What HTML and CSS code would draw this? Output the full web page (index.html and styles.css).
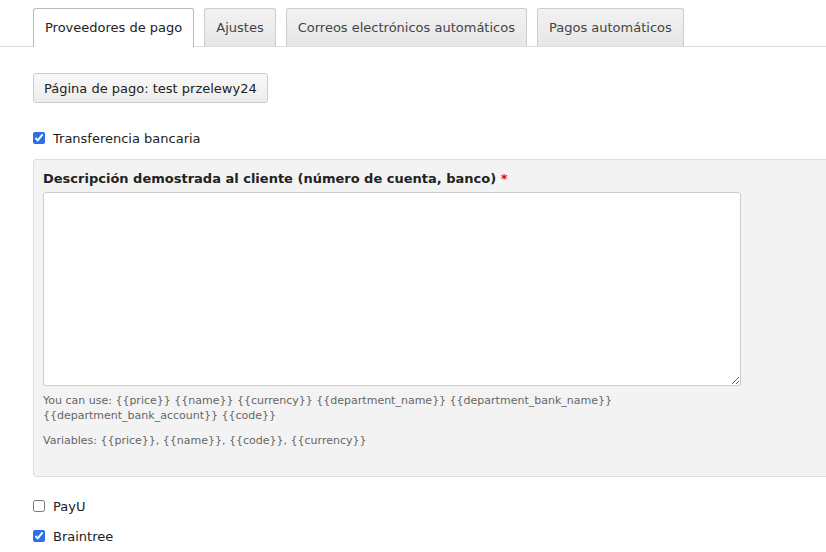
FILE: index.html
```html
<!DOCTYPE html>
<html lang="es">
<head>
  <meta charset="UTF-8">
  <title>Proveedores de pago</title>
  <link rel="stylesheet" href="styles.css">
</head>
<body>

<div class="tabs">
  <a class="tab active" href="#">Proveedores de pago</a>
  <a class="tab" href="#">Ajustes</a>
  <a class="tab" href="#">Correos electrónicos automáticos</a>
  <a class="tab" href="#">Pagos automáticos</a>
</div>

<div class="content">
  <button class="btn">Página de pago: test przelewy24</button>

  <!-- Bank transfer -->
  <label class="check">
    <input type="checkbox" checked> Transferencia bancaria
  </label>

  <div class="panel">
    <label class="field-label" for="desc">Descripción demostrada al cliente (número de cuenta, banco) <span class="req">*</span></label>
    <textarea id="desc"></textarea>
    <p class="help">You can use: {{price}} {{name}} {{currency}} {{department_name}} {{department_bank_name}} {{department_bank_account}} {{code}}</p>
    <p class="help">Variables: {{price}}, {{name}}, {{code}}, {{currency}}</p>
  </div>

  <label class="check">
    <input type="checkbox"> PayU
  </label>
  <label class="check">
    <input type="checkbox" checked> Braintree
  </label>
</div>

</body>
</html>
```

FILE: styles.css
```css
html {
  overflow: hidden;
}

body {
  margin: 0;
  font-family: "DejaVu Sans", Verdana, sans-serif;
  font-size: 13px;
  color: #222;
  background: #fff;
}

.tabs {
  display: flex;
  gap: 10px;
  padding: 8px 33px 0;
  border-bottom: 1px solid #ddd;
}

.tab {
  display: block;
  height: 38px;
  line-height: 38px;
  padding: 0 11px;
  border: 1px solid #ccc;
  border-bottom: none;
  border-radius: 3px 3px 0 0;
  background: linear-gradient(to bottom, #f2f2f2, #e6e6e6);
  color: #444;
  text-decoration: none;
  box-sizing: border-box;
}

.tab.active {
  background: #fff;
  color: #222;
  height: 39px;
  margin-bottom: -1px;
  border-color: #bbb;
}

.content {
  padding: 26px 0 0 33px;
}

.btn {
  display: block;
  height: 30px;
  padding: 0 10px;
  font-family: inherit;
  font-size: 13px;
  color: #222;
  border: 1px solid #ccc;
  border-radius: 3px;
  background: linear-gradient(to bottom, #f9f9f9, #ececec);
  cursor: pointer;
}

.check {
  display: flex;
  align-items: center;
  gap: 8px;
  height: 16px;
  color: #222;
}

.check input {
  margin: 0;
  width: 12px;
  height: 12px;
  accent-color: #2a6ee8;
}

.content > .btn + .check {
  margin-top: 27px;
}

.content > .check + .check {
  margin-top: 14px;
}

.panel {
  width: 900px;
  margin: 13px 0 21px;
  padding: 11px 9px 14px;
  background: #f3f3f3;
  border: 1px solid #ddd;
  border-radius: 3px;
  min-height: 291px;
}

.field-label {
  display: block;
  font-weight: bold;
  font-size: 13px;
  color: #222;
  margin-bottom: 6px;
}

.req {
  color: #e00;
}

textarea {
  display: block;
  width: 698px;
  height: 194px;
  box-sizing: border-box;
  border: 1px solid #ccc;
  border-radius: 3px;
  background: #fff;
  margin: 0;
}

.help {
  margin: 7px 0 0;
  width: 600px;
  font-size: 11px;
  line-height: 15px;
  color: #666;
}

.help + .help {
  margin-top: 10px;
}
```
